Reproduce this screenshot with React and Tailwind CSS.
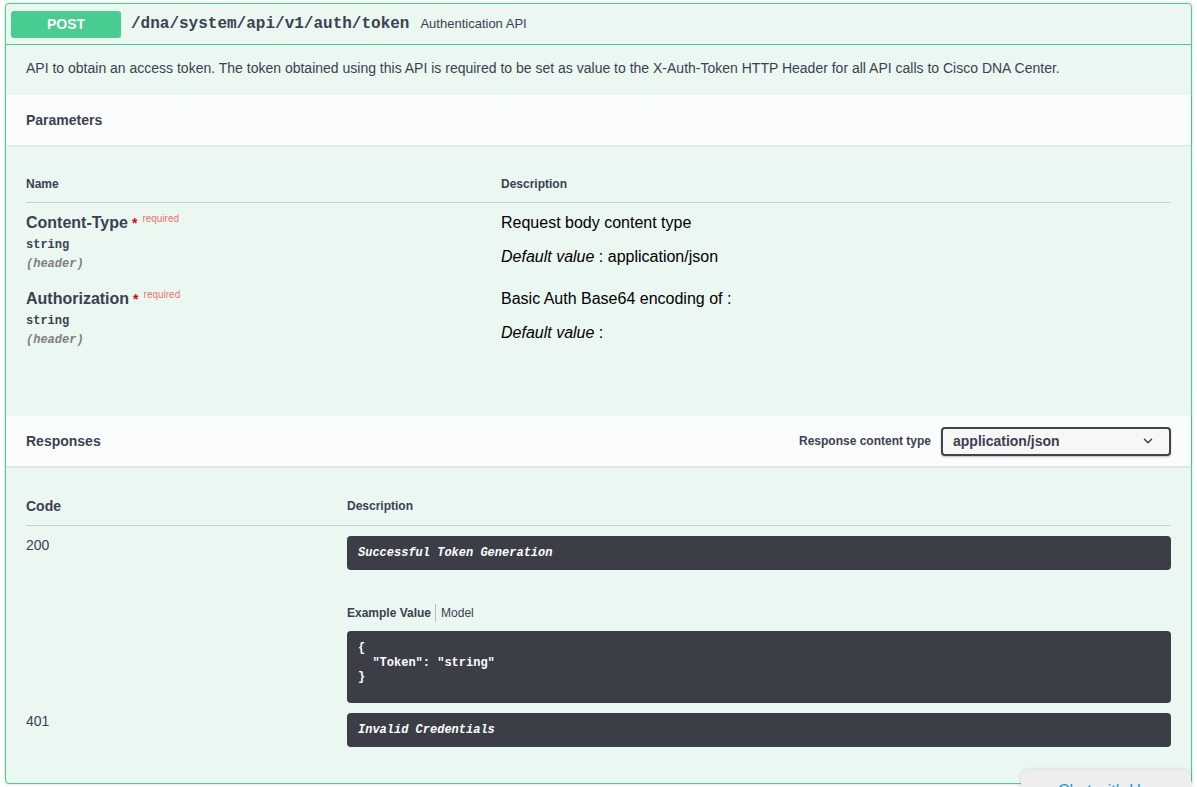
import { ChevronDown } from 'lucide-react';

const sans = "font-['Liberation_Sans',Helvetica,Arial,sans-serif]";
const mono = "font-['Liberation_Mono','Courier_New',monospace]";

function ParamRow({ name, description, defaultValue }) {
  return (
    <div className="flex h-[76px]">
      <div className="w-[475px] shrink-0">
        <div className="flex items-start h-[20px]">
          <span className="text-[16px] font-bold leading-[20px]">{name}</span>
          <span className="text-[14px] text-red-600 ml-[4px] leading-[20px] font-bold">*</span>
          <span className="text-[10px] text-[rgba(255,0,0,0.6)] ml-[5px] leading-[12px]">required</span>
        </div>
        <div className={`${mono} text-[12px] font-bold leading-[14px] mt-[5px]`}>string</div>
        <div className={`${mono} text-[12px] font-bold italic text-[#808080] leading-[14px] mt-[5px]`}>(header)</div>
      </div>
      <div className="flex-1 text-[16px] text-black leading-[20px]">
        <p>{description}</p>
        <p className="mt-[14px]">
          <i>Default value</i> : {defaultValue}
        </p>
      </div>
    </div>
  );
}

function DarkBlock({ children, className = '' }) {
  return (
    <div className={`bg-[#3b3e47] rounded-[4px] px-[11px] text-white ${mono} text-[12px] font-bold ${className}`}>
      {children}
    </div>
  );
}

export default function App() {
  return (
    <div className={`${sans} text-[#3b4151] bg-white min-h-[787px] pt-[3px] pl-[5px] relative overflow-hidden`}>
      <div className="w-[1187px] h-[781px] border border-[#49cc90] rounded-[4px] bg-[#ebf7f1] shadow-[0_0_3px_rgba(0,0,0,0.19)]">
        {/* summary */}
        <div className="flex items-center h-[41px] px-[5px] border-b border-[#49cc90]">
          <div className="w-[110px] h-[27px] rounded-[3px] bg-[#49cc90] text-white text-[14px] font-bold flex items-center justify-center">
            POST
          </div>
          <span className={`${mono} text-[16px] font-bold ml-[10px] text-[#3b4151]`}>/dna/system/api/v1/auth/token</span>
          <span className="text-[13px] ml-[11px]">Authentication API</span>
        </div>

        <div className="h-[50px] px-[20px] pb-[3px] flex items-center text-[14px]">
          API to obtain an access token. The token obtained using this API is required to be set as value to the X-Auth-Token HTTP Header for all API calls to Cisco DNA Center.
        </div>

        {/* parameters */}
        <div className="h-[50px] bg-white/80 shadow-[0_1px_2px_rgba(0,0,0,0.1)] px-[20px] flex items-center">
          <h4 className="text-[14px] font-bold">Parameters</h4>
        </div>
        <div className="px-[20px] pt-[30px] h-[271px]">
          <div className="flex text-[12px] font-bold h-[28px] border-b border-[rgba(59,65,81,0.2)] items-start">
            <div className="w-[475px]">Name</div>
            <div>Description</div>
          </div>
          <div className="pt-[10px]">
            <ParamRow name="Content-Type" description="Request body content type" defaultValue="application/json" />
            <ParamRow name="Authorization" description="Basic Auth Base64 encoding of :" defaultValue="" />
          </div>
        </div>

        {/* responses */}
        <div className="h-[50px] bg-white/80 shadow-[0_1px_2px_rgba(0,0,0,0.1)] px-[20px] flex items-center justify-between">
          <h4 className="text-[14px] font-bold">Responses</h4>
          <div className="flex items-center">
            <span className="text-[12px] font-bold mr-[10px]">Response content type</span>
            <div className="w-[230px] h-[29px] border-2 border-[#41444e] rounded-[4px] bg-[#f7f7f7] shadow-[0_1px_2px_rgba(0,0,0,0.25)] flex items-center justify-between pl-[10px] pr-[14px]">
              <span className="text-[14px] font-bold">application/json</span>
              <ChevronDown size={14} strokeWidth={2.5} className="text-[#3b4151]" />
            </div>
          </div>
        </div>

        <div className="px-[20px] pt-[30px]">
          <div className="flex h-[30px] border-b border-[rgba(59,65,81,0.2)] items-start">
            <div className="w-[321px] text-[14px] font-bold leading-[20px]">Code</div>
            <div className="text-[12px] font-bold leading-[20px]">Description</div>
          </div>

          <div className="flex pt-[10px]">
            <div className="w-[321px] text-[14px] leading-[18px]">200</div>
            <div className="flex-1">
              <DarkBlock className="h-[34px] flex items-center italic">Successful Token Generation</DarkBlock>
              <div className="mt-[35px] flex items-center text-[12px] h-[16px]">
                <span className="font-bold pr-[4px] border-r border-[rgba(59,65,81,0.3)]">Example Value</span>
                <span className="pl-[5px]">Model</span>
              </div>
              <DarkBlock className="mt-[10px] h-[72px] pt-[10px] leading-[14.5px] whitespace-pre">
                {'{\n  "Token": "string"\n}'}
              </DarkBlock>
            </div>
          </div>

          <div className="flex pt-[10px]">
            <div className="w-[321px] text-[14px] leading-[16px]">401</div>
            <div className="flex-1">
              <DarkBlock className="h-[34px] flex items-center italic">Invalid Credentials</DarkBlock>
            </div>
          </div>
        </div>
      </div>

      {/* chat widget peeking from bottom */}
      <div className="absolute left-[1021px] top-[770px] w-[170px] h-[50px] bg-[#eeeeee] rounded-t-[8px] shadow-[0_0_4px_rgba(0,0,0,0.15)] pl-[37px] pt-[9px]">
        <span className="text-[16px] text-[#1a9bd7]">Chat with Us</span>
      </div>
    </div>
  );
}
